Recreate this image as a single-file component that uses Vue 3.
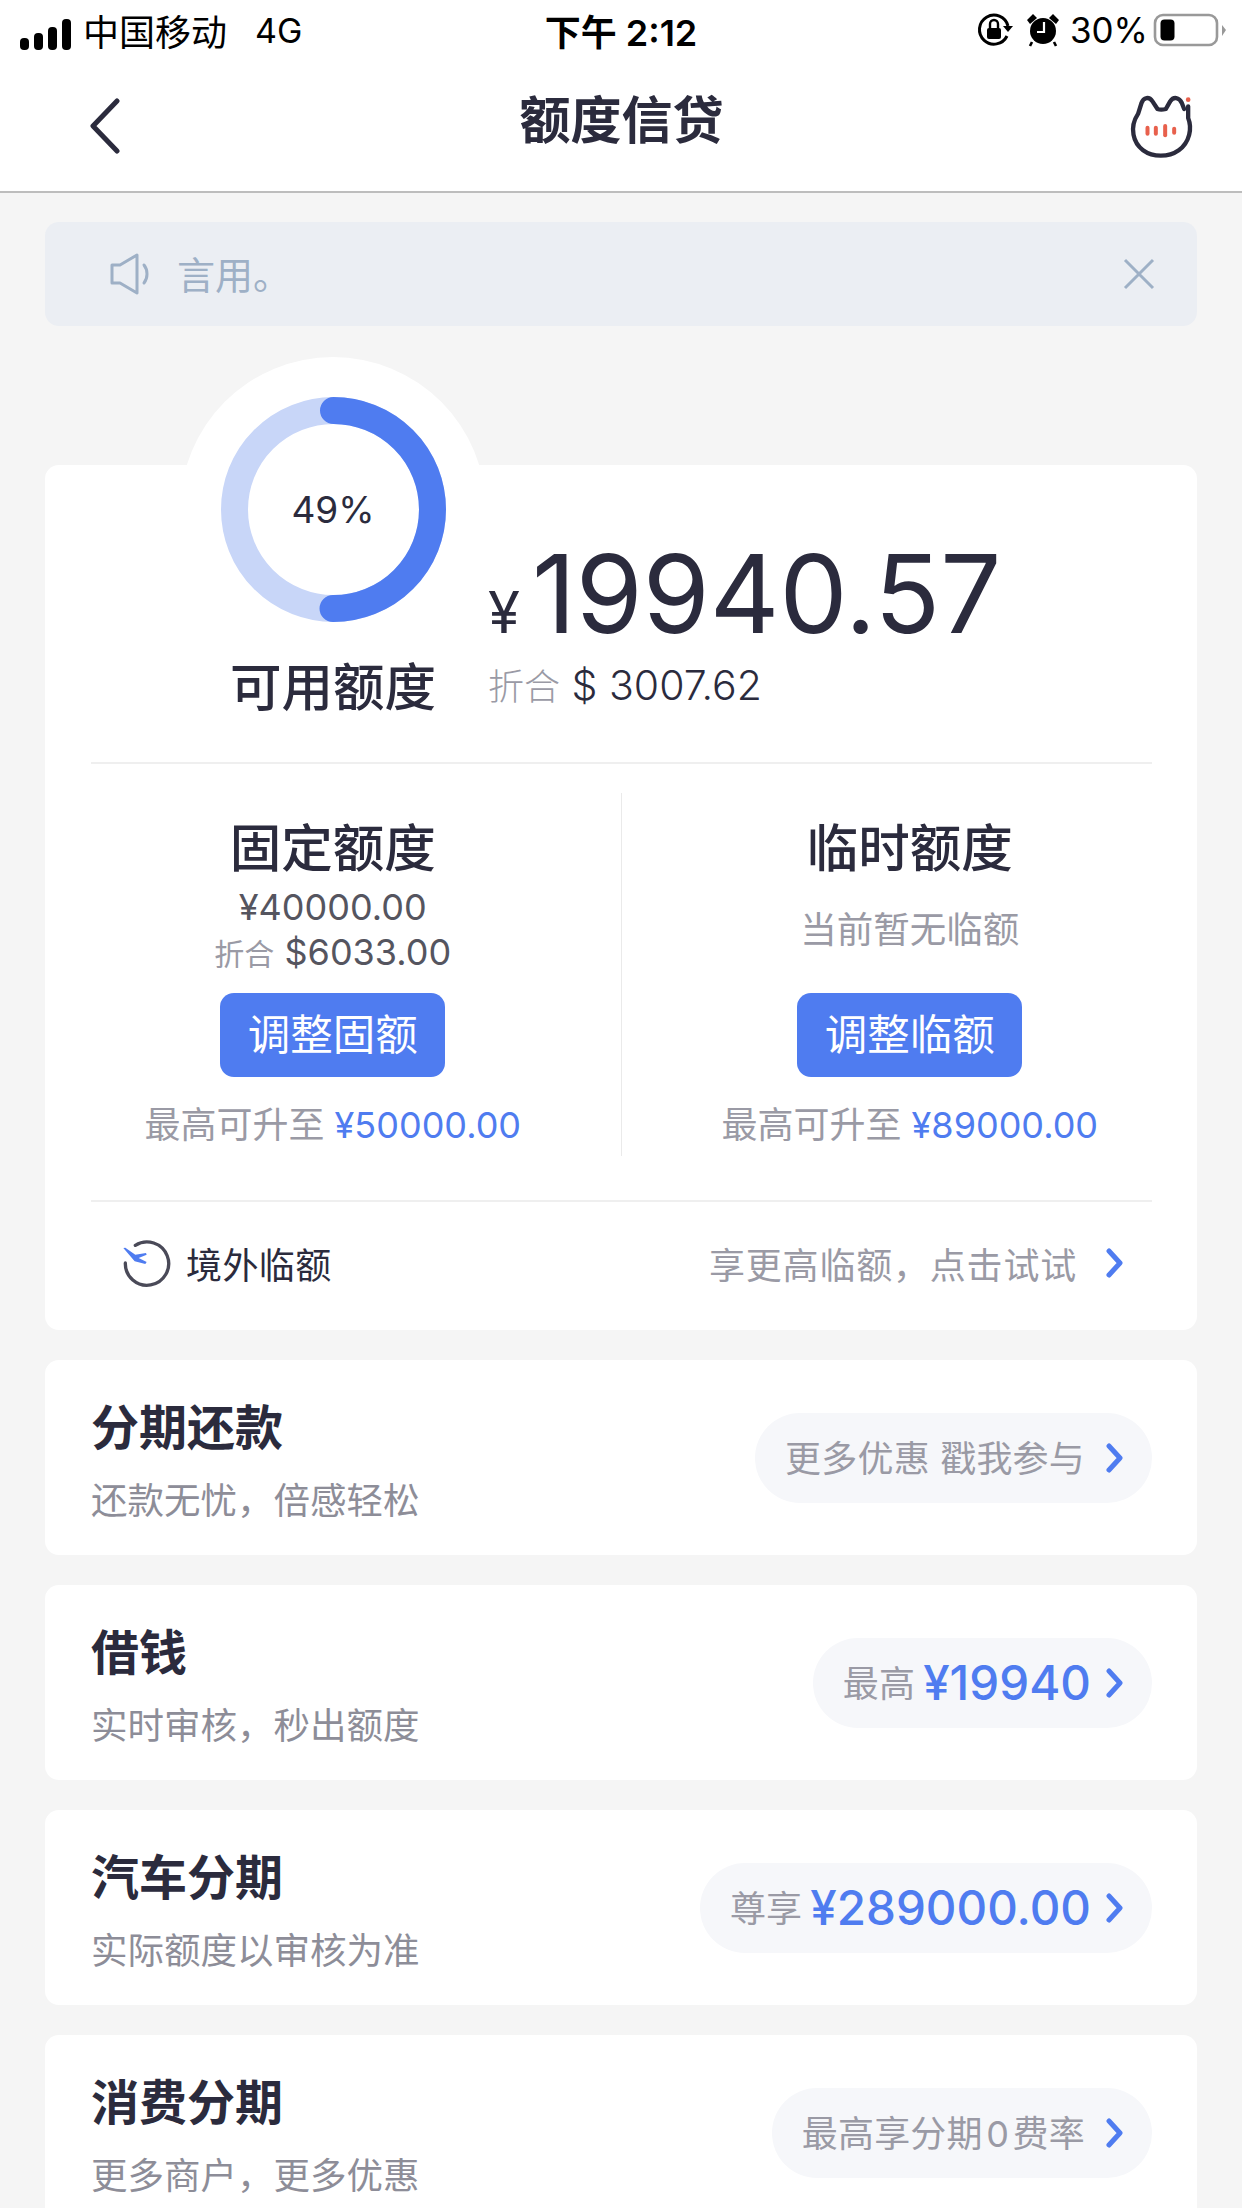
<template>
  <div class="page">
    <div class="status-bar">
      <div class="status-left">
        <svg class="signal" width="72" height="46" viewBox="0 0 72 46">
          <rect x="20" y="33" width="9" height="12" rx="4" />
          <rect x="34" y="28" width="9" height="17" rx="4" />
          <rect x="48" y="22" width="9" height="23" rx="4" />
          <rect x="62" y="14" width="9" height="31" rx="4" />
        </svg>
        <span class="carrier">中国移动</span>
        <span class="net">4G</span>
      </div>
      <div class="status-time">下午 2:12</div>
      <div class="status-right">
        <svg width="40" height="40" viewBox="0 0 40 40">
          <path d="M32 26 A14.5 14.5 0 1 1 33 16" fill="none" stroke="#000" stroke-width="3" />
          <path d="M28 16 L38 16 L33 22 Z" />
          <rect x="12" y="18" width="14" height="11" rx="2" />
          <path d="M15 18 V14 a4 4 0 0 1 8 0 V18" fill="none" stroke="#000" stroke-width="2.4" />
        </svg>
        <svg class="alarm" width="36" height="36" viewBox="0 0 36 36">
          <circle cx="18" cy="19" r="13" />
          <path d="M2 8 L8 2 L12 6 L5 12 Z M34 8 L28 2 L24 6 L31 12 Z" />
          <path d="M7 30 L5 34 M29 30 L31 34" stroke="#000" stroke-width="2.6" />
          <path d="M19 10 V20 H12" fill="none" stroke="#fff" stroke-width="2.2" />
        </svg>
        <span class="battery-text">30%</span>
        <svg class="battery" width="76" height="34" viewBox="0 0 76 34">
          <rect x="2" y="2" width="62" height="30" rx="8" fill="none" stroke="#999" stroke-width="2.6" />
          <rect x="7.500" y="6.500" width="14" height="21" rx="4" />
          <path d="M69 12 L73 17 L69 23 Z" fill="#999" />
        </svg>
      </div>
    </div>

    <div class="nav-bar">
      <svg class="back" width="34" height="56" viewBox="0 0 34 56">
        <path d="M29 3 L5 28 L29 53" fill="none" stroke="#2b2b3d" stroke-width="5" stroke-linecap="round" stroke-linejoin="round" />
      </svg>
      <div class="nav-title">额度信贷</div>
      <svg class="cat" width="67" height="65" viewBox="85 60 200 195">
        <path d="M262 100 V135 C268 150 270 165 265 185 C255 225 220 248 180 248 C140 248 105 225 98 185 C93 160 100 140 112 122 L122 90 C128 72 145 70 155 85 L170 108 Q180 112 195 108 L208 85 C218 70 235 72 243 90 L250 108" fill="none" stroke="#2b2b3d" stroke-width="13" stroke-linecap="round" stroke-linejoin="round" />
        <rect x="134" y="158" width="12" height="30" rx="6" fill="#e8604c" />
        <rect x="159" y="158" width="12" height="30" rx="6" fill="#e8604c" />
        <rect x="187" y="153" width="12" height="40" rx="6" fill="#e8604c" />
        <rect x="214" y="161" width="12" height="24" rx="6" fill="#e8604c" />
        <circle cx="262" cy="80" r="7" fill="#e8604c" />
      </svg>
    </div>

    <div class="content">
      <div class="notice">
        <svg class="speaker" width="44" height="42" viewBox="0 0 44 42">
          <path d="M11 12 H3 V30 H11 L28 40 V2 Z" fill="none" stroke="#9eb0c6" stroke-width="3" stroke-linejoin="round" />
          <path d="M35 12 C39 17 39 25 35 30" fill="none" stroke="#9eb0c6" stroke-width="3" stroke-linecap="round" />
        </svg>
        <span class="notice-text">言用。</span>
        <svg class="close" width="34" height="34" viewBox="0 0 34 34">
          <path d="M3 3 L31 31 M31 3 L3 31" stroke="#9eb0c6" stroke-width="3" />
        </svg>
      </div>

      <div class="main-card">
        <div class="bump"></div>
        <div class="hero">
          <div class="hero-left">
            <div class="ring">
              <svg width="225" height="225" viewBox="0 0 225 225">
                <circle cx="112.500" cy="112.500" r="99" fill="none" stroke="#c8d6f8" stroke-width="27" />
                <circle cx="112.500" cy="112.500" r="99" fill="none" stroke="#4f7cf0" stroke-width="27" stroke-linecap="round" :stroke-dasharray="ringDash" transform="rotate(-90 112.500 112.500)" />
              </svg>
              <span class="ring-text">49%</span>
            </div>
            <div class="hero-label">可用额度</div>
          </div>
          <div class="hero-right">
            <div class="amount"><span class="yen">¥</span>19940.57</div>
            <div class="convert"><span class="convert-label">折合</span> $ 3007.62</div>
          </div>
        </div>

        <div class="limits">
          <div v-for="c in limits" :key="c.title" class="limit-col">
            <div class="limit-title">{{ c.title }}</div>
            <div v-if="c.amount" class="limit-info">
              <div class="limit-amount">{{ c.amount }}</div>
              <div class="limit-amount"><span class="limit-small">折合</span> {{ c.usd }}</div>
            </div>
            <div v-else class="limit-info limit-none">{{ c.empty }}</div>
            <div class="limit-btn">{{ c.btn }}</div>
            <div class="limit-max">最高可升至 <span class="blue">{{ c.max }}</span></div>
          </div>
        </div>

        <div class="abroad">
          <svg class="plane" width="50" height="50" viewBox="65 60 150 150">
            <path d="M108 82 A65 65 0 1 1 78 135" fill="none" stroke="#4a4a58" stroke-width="10" stroke-linecap="round" />
            <path d="M72 90 L78 89 L108 110 L140 105 L142 110 L118 120 L142 132 L138 138 L106 130 Z" fill="#4f7cf0" />
          </svg>
          <span class="abroad-name">境外临额</span>
          <span class="abroad-tip">享更高临额，点击试试</span>
          <svg class="chevron" width="20" height="30" viewBox="0 0 20 30">
            <path d="M4 3 L15 15 L4 27" fill="none" stroke="#4f7cf0" stroke-width="5" stroke-linecap="round" stroke-linejoin="round" />
          </svg>
        </div>
      </div>

      <div v-for="r in rows" :key="r.title" class="row-card">
        <div class="row-text">
          <div class="row-title">{{ r.title }}</div>
          <div class="row-sub">{{ r.sub }}</div>
        </div>
        <div class="pill">
          <span class="pill-text">{{ r.label }}</span>
          <span v-if="r.value" class="pill-value">{{ r.value }}</span>
          <svg class="chevron" width="20" height="30" viewBox="0 0 20 30">
            <path d="M4 3 L15 15 L4 27" fill="none" stroke="#4f7cf0" stroke-width="5" stroke-linecap="round" stroke-linejoin="round" />
          </svg>
        </div>
      </div>
    </div>
  </div>
</template>

<script setup>
const circumference = 2 * Math.PI * 99
const ringDash = `${circumference * 0.5} ${circumference}`

const limits = [
  { title: '固定额度', amount: '¥40000.00', usd: '$6033.00', btn: '调整固额', max: '¥50000.00' },
  { title: '临时额度', empty: '当前暂无临额', btn: '调整临额', max: '¥89000.00' }
]

const rows = [
  { title: '分期还款', sub: '还款无忧，倍感轻松', label: '更多优惠 戳我参与' },
  { title: '借钱', sub: '实时审核，秒出额度', label: '最高', value: '¥19940' },
  { title: '汽车分期', sub: '实际额度以审核为准', label: '尊享', value: '¥289000.00' },
  { title: '消费分期', sub: '更多商户，更多优惠', label: '最高享分期\u200a0\u200a费率' }
]
</script>

<style>
html,
body {
  margin: 0;
  background: #f5f5f5;
}
</style>

<style scoped>
.page {
  width: 1242px;
  height: 2208px;
  overflow: hidden;
  background: #f5f5f5;
  color: #2b2b3d;
  font-family: Inter, "Noto Sans CJK SC", sans-serif;
}

.status-bar {
  height: 60px;
  display: grid;
  grid-template-columns: 1fr auto 1fr;
  align-items: center;
  background: #fff;
  color: #000;
}

.status-left {
  display: flex;
  align-items: center;
}

.signal {
  margin-right: 11px;
  margin-top: -4px;
}

.carrier {
  font-size: 36px;
}

.net {
  font-size: 34px;
  margin-left: 28px;
}

.status-time {
  font-size: 36px;
  font-weight: 600;
}

.status-right {
  display: flex;
  align-items: center;
  justify-content: flex-end;
  padding-right: 13px;
}

.alarm {
  margin-left: 10px;
}

.battery-text {
  font-size: 35px;
  margin-left: 9px;
}

.battery {
  margin-left: 5px;
}

.nav-bar {
  height: 131px;
  display: flex;
  align-items: center;
  justify-content: space-between;
  padding: 0 46px 0 88px;
  background: #fff;
  border-bottom: 2px solid #bdbdbd;
}

.nav-title {
  margin: 0 8px 10px 0;
  font-size: 51px;
  font-weight: 700;
  line-height: 60px;
}

.content {
  padding: 29px 45px 0;
}

.notice {
  height: 104px;
  display: flex;
  align-items: center;
  padding: 0 41px 0 64px;
  background: #ebeef3;
  border-radius: 14px;
}

.notice-text {
  flex: 1;
  margin: -3px 0 0 24px;
  font-size: 38px;
  color: #9eb0c6;
}

.main-card {
  position: relative;
  margin-top: 139px;
  padding: 0 45px 0 46px;
  background: #fff;
  border-radius: 14px;
}

.bump {
  position: absolute;
  left: 135px;
  top: -108px;
  width: 306px;
  height: 306px;
  border-radius: 50%;
  background: #fff;
}

.hero {
  position: relative;
  display: flex;
  align-items: flex-end;
  height: 252px;
  border-bottom: 2px solid #efefef;
  padding-bottom: 45px;
  box-sizing: content-box;
}

.hero-left {
  width: 290px;
  margin-left: 97px;
  display: flex;
  flex-direction: column;
  align-items: center;
}

.ring {
  position: relative;
  width: 225px;
  height: 225px;
  margin-top: -68px;
}

.ring svg {
  display: block;
}

.ring-text {
  position: absolute;
  inset: 0;
  display: flex;
  align-items: center;
  justify-content: center;
  font-size: 37px;
}

.hero-label {
  margin-top: 35px;
  font-size: 51.5px;
  font-weight: 500;
  line-height: 60px;
}

.hero-right {
  margin-left: 10px;
}

.amount {
  font-size: 108px;
  font-weight: 400;
  line-height: 110px;
  white-space: nowrap;
}

.yen {
  font-size: 58px;
  margin-right: 12px;
}

.convert {
  margin-top: -12px;
  font-size: 41px;
  font-weight: 300;
  line-height: 60px;
}

.convert-label {
  font-size: 36px;
  color: #9a9aa5;
}

.limits {
  display: grid;
  grid-template-columns: 1fr 1fr;
  padding: 29px 0 44px;
  border-bottom: 2px solid #efefef;
}

.limit-col {
  display: flex;
  flex-direction: column;
  align-items: center;
  padding-bottom: 10px;
}

.limit-col:first-child {
  border-right: 1px solid #eaeaea;
  padding-right: 46px;
}

.limit-col:last-child {
  padding-left: 46px;
}

.limit-title {
  margin-top: 25px;
  font-size: 51.5px;
  font-weight: 500;
  line-height: 60px;
}

.limit-info {
  height: 108px;
  margin-top: 7px;
}

.limit-amount {
  font-size: 36px;
  line-height: 45px;
  text-align: center;
  color: #55555f;
}

.limit-small {
  font-size: 30px;
  color: #9a9aa5;
}

.limit-none {
  display: flex;
  align-items: center;
  font-size: 36.500px;
  color: #9a9aa5;
  padding-bottom: 24px;
  box-sizing: border-box;
}

.limit-btn {
  width: 225px;
  height: 84px;
  border-radius: 14px;
  background: #4f7cf0;
  color: #fff;
  font-size: 42.500px;
  line-height: 84px;
  text-align: center;
}

.limit-max {
  margin-top: 27px;
  font-size: 36px;
  line-height: 42px;
  color: #9a9aa5;
  white-space: nowrap;
}

.blue {
  font-size: 36px;
  color: #4f7cf0;
}

.abroad {
  height: 128px;
  display: flex;
  align-items: center;
  padding: 0 27px 6px 30px;
  box-sizing: border-box;
}

.abroad-name {
  margin-left: 15px;
  font-size: 36px;
  letter-spacing: 0.4px;
}

.abroad-tip {
  margin-left: auto;
  margin-right: 28px;
  font-size: 36px;
  letter-spacing: 0.8px;
  color: #9a9aa5;
}

.row-card {
  height: 195px;
  margin-top: 30px;
  display: flex;
  align-items: center;
  justify-content: space-between;
  padding: 0 45px 0 46px;
  background: #fff;
  border-radius: 14px;
}

.row-text {
  padding-top: 5px;
}

.row-title {
  font-size: 48px;
  font-weight: 700;
  line-height: 60px;
}

.row-sub {
  margin-top: 21px;
  font-size: 36.500px;
  line-height: 44px;
  color: #8d8d98;
}

.pill {
  height: 90px;
  display: flex;
  align-items: center;
  padding: 0 27px 0 30px;
  border-radius: 45px;
  background: #f6f7fa;
}

.pill-text {
  margin-top: -3px;
  font-size: 36px;
  letter-spacing: 0.2px;
  color: #9a9aa5;
  white-space: nowrap;
}

.pill-value {
  margin: 0 -6px 0 8px;
  font-size: 47.5px;
  font-weight: 500;
  color: #4f7cf0;
}

.pill .chevron {
  margin-left: 20px;
}
</style>
